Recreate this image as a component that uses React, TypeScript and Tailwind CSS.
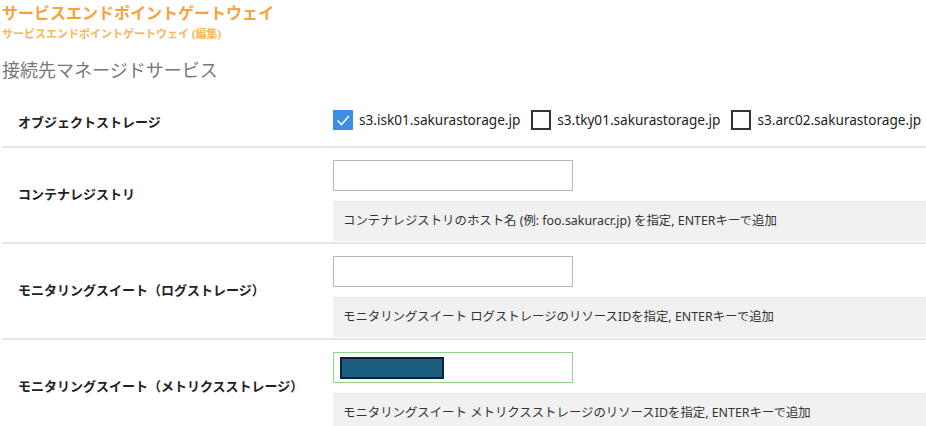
import React from "react";

const jp = { fontFamily: '"Noto Sans", "Noto Sans CJK JP", sans-serif' };

function Check({ checked, label }: { checked?: boolean; label: string }) {
  return (
    <div className="flex items-center gap-[6px]">
      {checked ? (
        <div className="w-[20px] h-[20px] bg-[#3d8ee2] flex items-center justify-center">
          <svg width="16" height="16" viewBox="0 0 16 16" fill="none">
            <path d="M2.5 8.5 L6.5 12.5 L14 4" stroke="white" strokeWidth="1.6" />
          </svg>
        </div>
      ) : (
        <div className="w-[20px] h-[20px] border-2 border-[#333] bg-white" />
      )}
      <span className="text-[13.6px] text-[#222]">{label}</span>
    </div>
  );
}

function Row({
  label,
  children,
}: {
  label: string;
  children: React.ReactNode;
}) {
  return (
    <div className="flex items-center border-b-2 border-[#e6e6e6] ml-[2px]">
      <div className="w-[331px] pl-[16px] text-[13px] font-bold text-[#222]">{label}</div>
      <div className="flex-1">{children}</div>
    </div>
  );
}

function InputRow({ label, help, active }: { label: string; help: string; active?: boolean }) {
  return (
    <Row label={label}>
      <div className="flex flex-col pt-[12px] pb-[1px]">
        <div
          className={
            active
              ? "w-[240px] h-[31px] border border-[#8ed48a] bg-white flex items-center pl-[6px]"
              : "w-[240px] h-[31px] border border-[#b5b5b5] bg-white"
          }
        >
          {active && <div className="w-[104px] h-[22px] bg-[#1b5e80] border-2 border-[#0b2233]" />}
        </div>
        <div className="mt-[10px] h-[40px] bg-[#f1f1f1] border-t border-[#e4e4e4] flex items-center pl-[10px] text-[12.4px] text-[#333]">
          {help}
        </div>
      </div>
    </Row>
  );
}

export default function App() {
  return (
    <div className="w-[926px] h-[426px] bg-white overflow-hidden" style={jp}>
      <div className="pl-[2px] pt-[3px]">
        <div className="text-[16px] font-bold text-[#f5a33a] leading-[21px]">サービスエンドポイントゲートウェイ</div>
        <div className="text-[11px] font-bold text-[#f7b65b] leading-[16px] mt-[2px]">サービスエンドポイントゲートウェイ (編集)</div>
        <div className="text-[18px] text-[#777] leading-[24px] mt-[16px]">接続先マネージドサービス</div>
      </div>
      <div className="mt-[17px]">
        <Row label="オブジェクトストレージ">
          <div className="h-[47px] pb-[4px] flex items-center gap-[11px]">
            <Check checked label="s3.isk01.sakurastorage.jp" />
            <Check label="s3.tky01.sakurastorage.jp" />
            <Check label="s3.arc02.sakurastorage.jp" />
          </div>
        </Row>
        <InputRow label="コンテナレジストリ" help="コンテナレジストリのホスト名 (例: foo.sakuracr.jp) を指定, ENTERキーで追加" />
        <InputRow
          label="モニタリングスイート（ログストレージ）"
          help="モニタリングスイート ログストレージのリソースIDを指定, ENTERキーで追加"
        />
        <InputRow
          label="モニタリングスイート（メトリクスストレージ）"
          help="モニタリングスイート メトリクスストレージのリソースIDを指定, ENTERキーで追加"
          active
        />
      </div>
    </div>
  );
}
